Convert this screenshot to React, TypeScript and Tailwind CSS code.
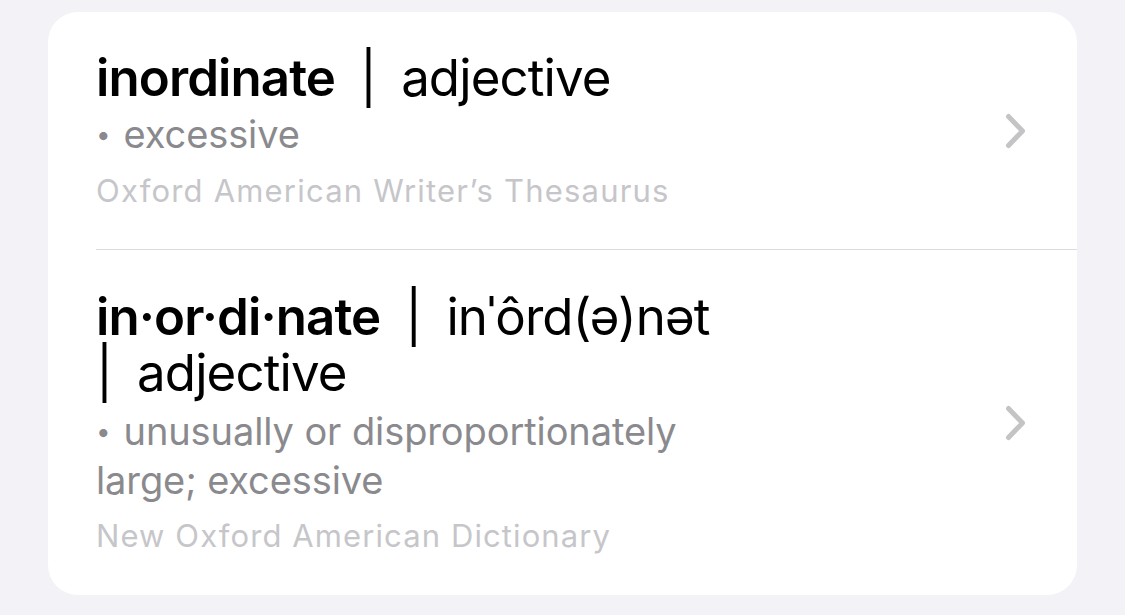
import React from "react";

function Chevron() {
  return (
    <svg width="21" height="36" viewBox="0 0 21 36" fill="none" className="shrink-0">
      <polyline
        points="3.5,3.5 17.5,18 3.5,32.5"
        stroke="#c4c4c7"
        strokeWidth="5"
        strokeLinecap="round"
        strokeLinejoin="round"
      />
    </svg>
  );
}

export default function App() {
  return (
    <div
      className="w-[1125px] h-[615px] bg-[#f2f2f7] pt-[12px] pl-[48px] pr-[48px]"
      style={{ fontFamily: "Inter, 'Noto Sans', sans-serif" }}
    >
      <div className="bg-white rounded-[30px] h-[583px] overflow-hidden">
        {/* Row 1 */}
        <div className="flex items-center pl-[48px] pr-[51px] h-[237px]">
          <div className="flex-1 flex flex-col">
            <div className="text-[51px] leading-[56px] text-black tracking-[-0.9px]">
              <span className="font-semibold">inordinate</span>
              <span className="mx-[25px]">|</span>
              <span>adjective</span>
            </div>
            <div className="text-[38px] leading-[45px] text-[#8a8a8e] mt-[6px] tracking-[-0.1px]">
              <span className="text-[26px] mr-[13px] relative top-[-4px]">•</span>excessive
            </div>
            <div className="text-[31px] leading-[40px] text-[#c6c6ca] mt-[10px] tracking-[1.2px]">
              Oxford American Writer’s Thesaurus
            </div>
          </div>
          <Chevron />
        </div>
        {/* Divider */}
        <div className="ml-[48px] h-px bg-[#dcdcde]" />
        {/* Row 2 */}
        <div className="flex items-center pl-[48px] pr-[51px] h-[345px]">
          <div className="flex-1 flex flex-col">
            <div className="text-[51px] leading-[56px] text-black tracking-[-0.9px]">
              <span className="font-semibold">in·or·di·nate</span>
              <span className="mx-[25px]">|</span>
              <span>inˈôrd(ə)nət</span>
              <br />
              <span className="mr-[25px]">|</span>
              <span>adjective</span>
            </div>
            <div className="text-[38px] leading-[45px] text-[#8a8a8e] mt-[8px] tracking-[-0.1px]">
              <span className="text-[26px] mr-[13px] relative top-[-4px]">•</span>unusually or disproportionately
              <br />
              large; excessive
            </div>
            <div className="text-[31px] leading-[40px] text-[#c6c6ca] mt-[13px] tracking-[1.1px]">
              New Oxford American Dictionary
            </div>
          </div>
          <Chevron />
        </div>
      </div>
    </div>
  );
}
